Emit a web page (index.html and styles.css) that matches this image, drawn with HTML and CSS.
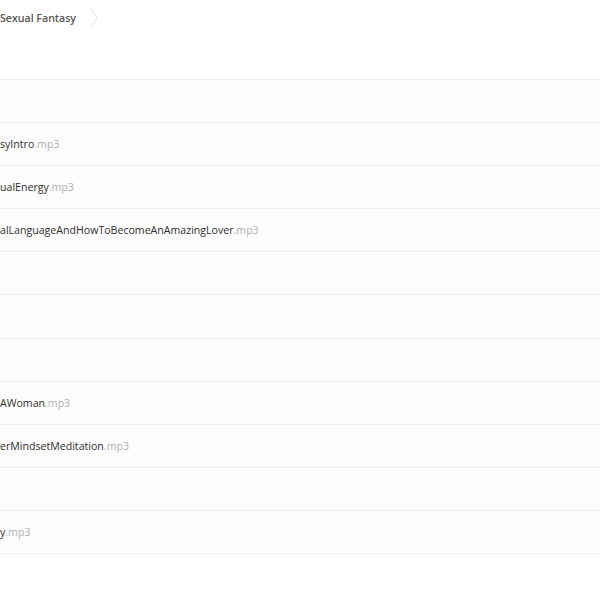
FILE: index.html
```html
<!DOCTYPE html>
<html>
<head>
<meta charset="utf-8">
<link rel="stylesheet" href="styles.css">
</head>
<body>
<div class="page">
  <div class="crumbs">
    <span class="crumb">Sexual Fantasy</span>
    <svg class="chev" width="10" height="22" viewBox="0 0 10 22"><path d="M1 1 L8.5 11 L1 21" fill="none" stroke="#e2e2e2" stroke-width="1"/></svg>
  </div>
  <ul class="files">
    <li class="row"></li>
    <li class="row"><span class="name">syIntro</span><span class="ext">.mp3</span></li>
    <li class="row"><span class="name">ualEnergy</span><span class="ext">.mp3</span></li>
    <li class="row"><span class="name">alLanguageAndHowToBecomeAnAmazingLover</span><span class="ext">.mp3</span></li>
    <li class="row"></li>
    <li class="row"></li>
    <li class="row"></li>
    <li class="row"><span class="name">AWoman</span><span class="ext">.mp3</span></li>
    <li class="row"><span class="name">erMindsetMeditation</span><span class="ext">.mp3</span></li>
    <li class="row"></li>
    <li class="row"><span class="name">y</span><span class="ext">.mp3</span></li>
  </ul>
</div>
</body>
</html>
```
FILE: styles.css
```css
html, body {
  margin: 0;
  padding: 0;
  background: #ffffff;
  overflow: hidden;
}
.page {
  font-family: "Open Sans", "DejaVu Sans", sans-serif;
  font-size: 10.6px;
  width: 600px;
}
.crumbs {
  display: flex;
  align-items: center;
  height: 36px;
  gap: 13px;
}
.crumb {
  color: #555555;
  font-weight: 600;
}
.chev {
  display: block;
}
.files {
  list-style: none;
  margin: 43px 0 0 0;
  padding: 0;
  border-bottom: 1px solid #efefef;
}
.row {
  height: 42.1px;
  border-top: 1px solid #efefef;
  background: #fdfdfd;
  display: flex;
  align-items: center;
}
.name {
  color: #2e2e2e;
}
.ext {
  color: #b0b0b0;
}
```
